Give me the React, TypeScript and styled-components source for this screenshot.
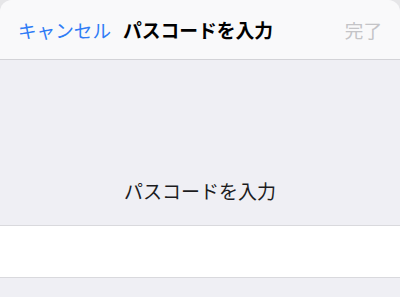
import React from 'react';
import styled, { createGlobalStyle } from 'styled-components';

const GlobalStyle = createGlobalStyle`
  html, body {
    margin: 0;
    padding: 0;
    background: #e6e6e8;
  }
  body {
    font-family: "Noto Sans CJK JP", "Noto Sans", sans-serif;
  }
`;

const Sheet = styled.div`
  width: 400px;
  height: 297px;
  background: #efeff4;
  border-radius: 12px 12px 0 0;
  overflow: hidden;
  display: flex;
  flex-direction: column;
`;

const NavBar = styled.div`
  height: 60px;
  background: #f9f9fa;
  border-bottom: 1px solid #d3d3d7;
  display: grid;
  grid-template-columns: 1fr auto 1fr;
  align-items: center;
  padding: 0 18px;
  box-sizing: border-box;
  flex-shrink: 0;
`;

const NavButton = styled.span<{ $disabled?: boolean; $align: 'left' | 'right' }>`
  font-size: 18.6px;
  line-height: 1;
  color: ${p => (p.$disabled ? '#c4c4c7' : '#2f7cf6')};
  justify-self: ${p => (p.$align === 'left' ? 'start' : 'end')};
  padding-top: 1px;
`;

const NavTitle = styled.span`
  font-size: 18.8px;
  font-weight: 700;
  line-height: 1;
  color: #000;
  padding-top: 1px;
  margin-left: -4px;
`;

const Body = styled.div`
  flex: 1;
  display: flex;
  flex-direction: column;
`;

const Prompt = styled.div`
  height: 166px;
  display: flex;
  align-items: flex-end;
  justify-content: center;
  padding-bottom: 25px;
  box-sizing: border-box;
  font-size: 19px;
  line-height: 1;
  color: #1c1c1e;
  border-bottom: 1px solid #d9d9dd;
`;

const Field = styled.div`
  height: 51px;
  background: #fff;
  border-bottom: 1px solid #d9d9dd;
`;

export default function App() {
  return (
    <>
      <GlobalStyle />
      <Sheet>
        <NavBar>
          <NavButton $align="left">キャンセル</NavButton>
          <NavTitle>パスコードを入力</NavTitle>
          <NavButton $align="right" $disabled>完了</NavButton>
        </NavBar>
        <Body>
          <Prompt>パスコードを入力</Prompt>
          <Field />
        </Body>
      </Sheet>
    </>
  );
}
